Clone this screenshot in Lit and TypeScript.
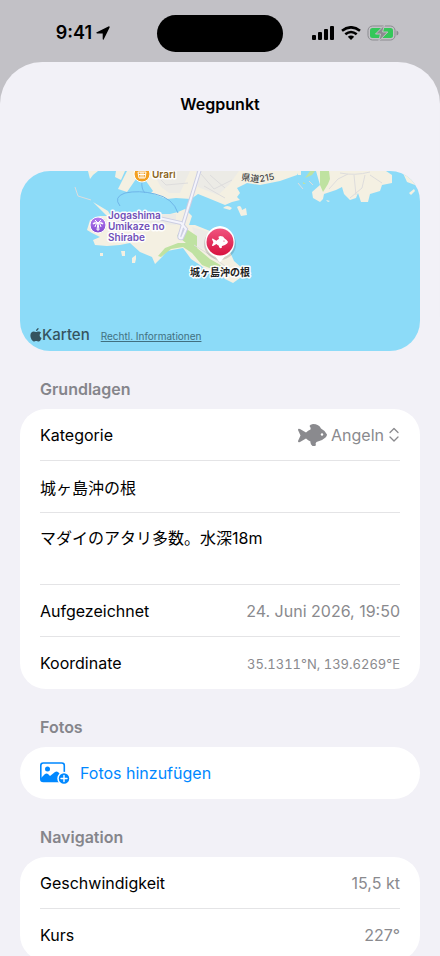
import { LitElement, html, css, svg } from "lit";
import { customElement, property } from "lit/decorators.js";

const fishPath =
  "M0 6 Q0 4 2 5 L8 8.500 Q10 6.500 12.500 5.500 Q13 3.500 11.500 2 Q12 .5 15 0 Q21 0 23 4.500 Q27 6.500 29 10.500 Q29 12 27.500 13.500 Q24 17 18.500 18 Q17 19.500 18 21 Q17 22.500 14.500 22 Q12 20 12.500 17.500 Q10 16.500 8 14.500 L2 18 Q0 19 0 17 L2.500 11.500 Z";

@customElement("map-preview")
class MapPreview extends LitElement {
  static styles = css`
    :host {
      display: block;
      position: relative;
      height: 180px;
      border-radius: 30px;
      overflow: hidden;
      background: #8cdbf8;
    }
    .map {
      display: block;
      width: 100%;
      height: 100%;
    }
    .land {
      fill: #f4f0e2;
    }
    .town {
      fill: #ecebe6;
    }
    .green {
      fill: #bfe2a1;
    }
    .road {
      fill: none;
      stroke: #cccee2;
      stroke-width: 4;
    }
    .roadtop {
      fill: none;
      stroke: #f4f4fc;
      stroke-width: 2;
    }
    .street {
      fill: none;
      stroke: #dddcdc;
      stroke-width: 1;
    }
    .ferry {
      fill: none;
      stroke: #6fb5e8;
      stroke-width: 1;
    }
    text {
      font-family: Inter, "Noto Sans CJK JP", sans-serif;
      paint-order: stroke;
      stroke: #fffffff0;
      stroke-width: 3px;
      stroke-linejoin: round;
      font-weight: 600;
    }
    .place {
      font-size: 10px;
      fill: #7050b8;
    }
    .shop {
      font-size: 10px;
      fill: #8a6420;
    }
    .route {
      font-size: 9px;
      font-weight: 500;
      fill: #444;
      stroke: #f5f3e8;
      stroke-width: 1px;
    }
    .spot {
      font-size: 10px;
      font-weight: 700;
      fill: #222;
      text-anchor: middle;
    }
    .legal {
      position: absolute;
      left: 10px;
      bottom: 7px;
      display: flex;
      align-items: center;
      gap: 11px;
      color: #35545f;
    }
    .brand {
      display: flex;
      align-items: center;
      font-size: 15px;
      line-height: 18px;
      font-weight: 500;
    }
    .legal a {
      color: #417080;
      font-size: 10px;
      line-height: 12px;
      padding-top: 2px;
    }
  `;

  render() {
    return html`
      <svg class="map" viewBox="0 0 400 180" preserveAspectRatio="xMidYMid slice" role="img" aria-label="Karte">
        <defs>
          <linearGradient id="red" x1="0" y1="0" x2="0" y2="1">
            <stop offset="0" stop-color="#f0547f" />
            <stop offset="1" stop-color="#d8123f" />
          </linearGradient>
          <linearGradient id="violet" x1="0" y1="0" x2="0" y2="1">
            <stop offset="0" stop-color="#b67bf0" />
            <stop offset="1" stop-color="#8148d0" />
          </linearGradient>
        </defs>
        ${this.coast()} ${this.labels()}
      </svg>
      <div class="legal">
        <span class="brand">
          <svg width="12" height="14" viewBox="0 0 12 14" fill="currentColor" aria-hidden="true">
            <path d="M8.600 0 C8.700 1.600 7.500 3 6 3.100 C5.900 1.600 7.200 .2 8.600 0 Z M6 4 C6.700 4 7.400 3.400 8.600 3.400 C9.700 3.400 10.600 4 11.100 4.700 C9 6 9.300 9 11.600 9.900 C11 11.600 9.800 13.400 8.600 13.400 C7.700 13.400 7.300 12.900 6.200 12.900 C5.100 12.900 4.600 13.400 3.800 13.400 C2.300 13.400 .4 10.400 .4 7.600 C.4 4.900 2 3.500 3.700 3.500 C4.700 3.500 5.400 4 6 4 Z" />
          </svg>
          Karten
        </span>
        <a href="#legal">Rechtl. Informationen</a>
      </div>
    `;
  }

  private coast() {
    return svg`
      <path class="land" d="M68 0 H78 L73 4 L70 8 Z M96 0 H105 L101 9 L95 6 Z" />
      <path class="land" d="M107 0 L98 18 L107 21 L116 8 L126 10 L133 20 L131 22 L147 28 L156 27 L171 28 L178 23 L188 27 L205 34 L212 31 L220 29 L217 26 L220 22 L217 17 L227 12 L240 14 L260 10 L277 4 L279 0 Z" />
      <path class="town" d="M132 0 H170 L160 22 L149 22 L141 16 Z M176 0 H219 L209 14 L198 24 L178 16 Z" />
      <path class="land" d="M203 37 Q207 33 212 37 L210 39 Z M217 36 Q221 33 222 39 L226 37 L227 44 L221 45 Z" />
      <path class="land" d="M73 31 L88 40 L91 45 L104 41 L120 44 L150 43 L158 41 L165 38 L172 45 L169 54 L175 54 L190 60 L206 72 L214 90 L223 98 L226 104 L220 107 L213 112 L205 108 L203 106 L190 102 L180 94 L171 88 L163 77 L147 80 L142 86 L135 93 L132 86 L120 81 L110 72 L100 74 L87 75 L75 74 L73 69 L80 66 L72 62 L67 59 L70 49 L80 45 L87 45 Z" />
      <path class="town" d="M94 43 L156 43 L156 54 L94 52 Z M172 56 L189 61 L190 80 L178 76 Z" />
      <path class="street" d="M55 16 L58 25 L71 29" stroke-width="2" />
      <path class="land" d="M101 80 h4 v5 h-3 Z M112 87 l4 -3 v4 l-1 4 h-3 Z M80 82 h3 v3 h-3 Z" />
      <path class="green" d="M160 60 L168 59 L177 65 L177 77 L190 88 L202 95 L214 103 L207 104 L182 94 L172 82 L163 76 L151 78 L141 86 L138 85 L145 77 L158 72 L166 72 L157 65 Z" />
      <path class="land" d="M296 0 L300 14 L292 21 L293 27 L300 31 L303 28 L304 23 L316 19 L322 16 L324 23 L330 29 L336 27 L338 22 L341 31 L348 31 L350 23 L360 20 L362 14 L372 12 L372 4 L366 0 Z M277 0 h4 v4 h-3 Z M306 29 l4 1 l-2 1 Z" />
      <path class="green" d="M285 7 L290 0 H295 L292 4 Z M300 0 H309 L310 8 L308 13 L303 21 L300 14 Z M283 11 l3 2 h-3 Z" />
      <path class="land" d="M382 0 L387 11 L395 14 L400 16 V0 Z M389 22 L394 18 L395 20 L391 24 Z" />
      <path class="street" d="M138 6 L146 14 L168 12 M181 3 L194 18 L212 9 M184 15 L205 27 M190 4 L205 17 M309 18 L318 8 L328 3 M334 4 L336 24 M345 4 L342 17 L330 27 M350 4 L362 12" />
      <path class="ferry" d="M100 35 Q93 26 105 22 Q119 19 135 23 Q153 27 158 42 M122 10 Q121 18 125 22" />
      <path class="street" d="M278 12 l5 6 M289 10 l4 4" />
      <path class="road" d="M180 -2 L160 63 Q158 68 162 67 L166 58 L161 52 L130 45 H95" />
      <path class="roadtop" d="M180 -2 L160 63 Q158 68 162 67 L166 58 L161 52 L130 45 H95" />
      <path class="street" d="M174 74 L190 84 L205 95 M320 2 Q335 5 350 1" />
    `;
  }

  private labels() {
    return svg`
      <circle cx="122" cy="3" r="8" fill="#f2a022" stroke="#fff" />
      <path d="M118 1 H126 L125 7 H119 Z M119 3.500 H125 M121 1 V7 M123 1 V7" fill="none" stroke="#fff" />
      <text class="shop" x="132" y="7">Urari</text>
      <text class="route" x="221" y="9" transform="rotate(8 221 9)">県道</text>
      <text class="route" x="240" y="11" transform="rotate(-10 240 11)">215</text>
      <circle cx="78" cy="54" r="8" fill="url(#violet)" stroke="#fff" />
      <path d="M78 52 L77 59 H79 Z M78 52 Q74 50 73 53 Q75 52 78 52 Q75 53 75 56 M78 52 Q82 50 83 53 Q81 52 78 52 Q81 53 81 56 M78 52 L75 49 M78 52 L81 49" fill="none" stroke="#fff" />
      <text class="place" x="88" y="48">Jogashima</text>
      <text class="place" x="88" y="59">Umikaze no</text>
      <text class="place" x="88" y="70">Shirabe</text>
      <circle cx="200" cy="73" r="16" fill="#0002" />
      <path d="M200 56 A15 15 0 0 1 204 85 L200 90 L196 85 A15 15 0 0 1 200 56 Z" fill="#fff" stroke="#fff" stroke-width="2" stroke-linejoin="round" />
      <circle cx="200" cy="71" r="13.500" fill="url(#red)" />
      <path d="${fishPath}" fill="#fff" transform="translate(192 65) scale(.55)" />
      <circle cx="204" cy="70" r="0.600" fill="#e0204f" />
      <text class="spot" x="200" y="105">城ヶ島沖の根</text>
    `;
  }
}

@customElement("form-row")
class FormRow extends LitElement {
  @property() label = "";
  @property() value = "";
  @property({ type: Boolean }) small = false;

  static styles = css`
    :host {
      display: block;
    }
    .row {
      display: flex;
      align-items: center;
      justify-content: space-between;
      height: 51px;
    }
    .value {
      color: #8a8a8e;
    }
    .small {
      font-size: 13px;
      font-variant-numeric: tabular-nums;
      padding-top: 2px;
    }
  `;

  render() {
    return html`<div class="row">
      <span>${this.label}</span>
      <span class="value ${this.small ? "small" : ""}">${this.value}</span>
    </div>`;
  }
}

@customElement("app-root")
class AppRoot extends LitElement {
  static styles = css`
    * {
      box-sizing: border-box;
    }
    :host {
      display: flex;
      flex-direction: column;
      height: 100vh;
      background: #c2c1c6;
      color: #000;
      font: 400 16px/20px Inter, "Noto Sans CJK JP", sans-serif;
    }
    .status {
      flex: none;
      display: grid;
      grid-template-columns: 1fr 126px 1fr;
      align-items: center;
      height: 62px;
      padding-top: 4px;
    }
    .time {
      display: flex;
      align-items: center;
      justify-content: flex-end;
      gap: 4px;
      padding-right: 47px;
      font-size: 18px;
      font-weight: 600;
    }
    .island {
      height: 37px;
      border-radius: 19px;
      background: #000;
    }
    .signals {
      display: flex;
      align-items: center;
      gap: 6px;
      padding-left: 29px;
    }
    .sheet {
      flex: 1;
      min-height: 0;
      overflow-y: auto;
      scrollbar-width: none;
      padding: 0 20px 32px;
      border-radius: 42px 42px 0 0;
      background: #f2f1f7;
    }
    h1 {
      margin: 32px 0 56px;
      font-size: 16px;
      line-height: 21px;
      font-weight: 600;
      text-align: center;
    }
    h2 {
      margin: 28px 20px 10px;
      font-size: 16px;
      line-height: 20px;
      font-weight: 600;
      color: #85858b;
    }
    .card {
      padding: 0 20px 1px;
      border-radius: 26px;
      background: #fff;
    }
    .card > * + * {
      border-top: 1px solid #e4e4e6;
    }
    .line {
      display: flex;
      align-items: center;
      justify-content: space-between;
      height: 51px;
    }
    .pick {
      display: flex;
      align-items: center;
      gap: 4px;
      color: #8a8a8e;
    }
    select,
    input,
    textarea,
    button {
      margin: 0;
      padding: 0;
      border: 0;
      border-radius: 0;
      background: none;
      color: inherit;
      font: inherit;
      appearance: none;
      outline: none;
    }
    select {
      field-sizing: content;
    }
    input {
      display: block;
      width: 100%;
      height: 52px;
    }
    textarea {
      display: block;
      width: 100%;
      height: 72px;
      padding-top: 15px;
      resize: none;
    }
    .add {
      display: flex;
      align-items: center;
      gap: 10px;
      width: 100%;
      height: 51px;
      color: #0088ff;
    }
  `;

  render() {
    return html`
      <header class="status">
        <div class="time">
          9:41
          <svg width="14" height="14" viewBox="0 0 14 14" aria-hidden="true">
            <path d="M.8 6.200 L12.400 .4 Q14 0 13.600 1.600 L7.800 13.200 Q7 14.400 6.700 13 V7.400 H1 Q-.4 7 .8 6.200 Z" />
          </svg>
        </div>
        <div class="island"></div>
        <div class="signals">
          <svg width="23" height="14" viewBox="0 0 23 14" aria-hidden="true">
            <rect x="0" y="9" width="4" height="5" rx="1" />
            <rect x="6" y="6" width="4" height="8" rx="1" />
            <rect x="12" y="3" width="4" height="11" rx="1" />
            <rect x="18" y="0" width="4" height="14" rx="1" />
          </svg>
          <svg width="20" height="14" viewBox="0 0 20 14" fill="none" stroke="#000" stroke-width="2.600" aria-hidden="true">
            <path d="M1 4.800 Q10 -2.200 19 4.800 M4.300 8.300 Q10 3.700 15.700 8.300" />
            <path d="M10 14 L6.800 10.800 Q10 8.200 13.200 10.800 Z" fill="#000" stroke="none" />
          </svg>
          <svg width="32" height="16" viewBox="0 0 32 16" aria-hidden="true">
            <rect x="1" y="1" width="27" height="14" rx="4.500" fill="none" stroke="#8b8b90" />
            <rect x="3" y="3" width="23" height="10" rx="2.500" fill="#34c759" />
            <path d="M29.500 5.500 Q31.500 6 31.500 8 T29.500 10.500 Z" fill="#8b8b90" />
            <path d="M17.500 0 L8.500 9 H13.500 L11.800 16 L20.800 7 H15.600 Z" fill="#8b8b90" stroke="#c2c1c6" />
          </svg>
        </div>
      </header>
      <main class="sheet">
        <h1>Wegpunkt</h1>
        <map-preview></map-preview>

        <h2>Grundlagen</h2>
        <section class="card">
          <div class="line">
            <label for="category">Kategorie</label>
            <span class="pick">
              <svg width="29" height="22" viewBox="0 0 29 22" fill="#8a8a8e" aria-hidden="true">
                <path d=${fishPath} />
                <circle cx="24" cy="10.500" r="1.200" fill="#fff" />
              </svg>
              <select id="category">
                <option>Angeln</option>
              </select>
              <svg width="12" height="16" viewBox="0 0 12 16" fill="none" stroke="#8a8a8e" stroke-width="1.300" stroke-linecap="round" stroke-linejoin="round" aria-hidden="true">
                <path d="M2 5.500 L6 1.500 L10 5.500 M2 10 L6 14 L10 10" />
              </svg>
            </span>
          </div>
          <input type="text" aria-label="Name" .value=${"城ヶ島沖の根"} />
          <textarea aria-label="Notizen" .value=${"マダイのアタリ多数。水深18m"}></textarea>
          <form-row label="Aufgezeichnet" value="24. Juni 2026, 19:50"></form-row>
          <form-row label="Koordinate" value="35.1311°N, 139.6269°E" small></form-row>
        </section>

        <h2>Fotos</h2>
        <section class="card">
          <button class="add" type="button">
            <svg width="30" height="24" viewBox="0 0 30 24" aria-hidden="true">
              <rect x="0.800" y="2" width="23.500" height="18.500" rx="2.500" fill="none" stroke="#0088ff" stroke-width="1.600" />
              <circle cx="7.500" cy="8" r="2.500" fill="#0088ff" />
              <path d="M1 17 L5 13 Q6.500 12 8 13 L10 15 L15 11 Q16.500 10 18 11 L24 17 V20 H1 Z" fill="#0088ff" />
              <circle cx="24" cy="17.500" r="6" fill="#0088ff" stroke="#fff" stroke-width="1.500" />
              <path d="M24 14.500 V20.500 M21 17.500 H27" stroke="#fff" stroke-width="1.400" stroke-linecap="round" />
            </svg>
            Fotos hinzufügen
          </button>
        </section>

        <h2>Navigation</h2>
        <section class="card">
          <form-row label="Geschwindigkeit" value="15,5 kt"></form-row>
          <form-row label="Kurs" value="227°"></form-row>
        </section>
      </main>
    `;
  }
}
